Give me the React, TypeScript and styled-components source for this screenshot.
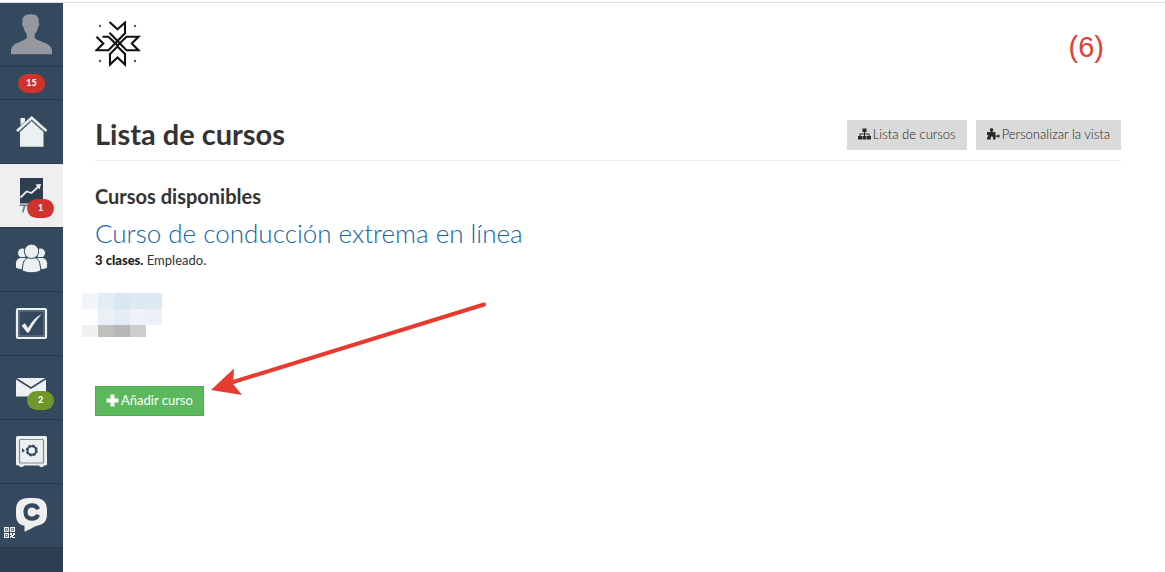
import React from "react";
import styled, { createGlobalStyle } from "styled-components";

const GlobalStyle = createGlobalStyle`
  *, *::before, *::after { box-sizing: border-box; }
  body {
    margin: 0;
    background: #fff;
    color: #333;
    font-family: Lato, "Open Sans", sans-serif;
    font-size: 13px;
    line-height: 18px;
  }
  h1, h2, h3, p, ul { margin: 0; padding: 0; }
`;

const Page = styled.div`
  position: relative;
  display: flex;
  flex-direction: column;
  min-height: 100vh;
`;

const TopLine = styled.div`
  height: 3px;
  border-bottom: 1px solid #dcdcdc;
`;

const Body = styled.div`
  display: flex;
  flex: 1;
`;

const Sidebar = styled.nav`
  flex: 0 0 63px;
  background: #2e3e50;
`;

const Menu = styled.ul`
  list-style: none;
`;

const MenuItem = styled.li`
  border-bottom: 1px solid #2c3c50;
`;

const MenuLink = styled.a<{ $active?: boolean; $short?: boolean }>`
  position: relative;
  display: flex;
  align-items: center;
  justify-content: center;
  height: ${(p) => (p.$short ? 32 : 63)}px;
  background: ${(p) => (p.$active ? "#efefef" : "#34495e")};
  text-decoration: none;

  svg { display: block; }
`;

const Badge = styled.span<{ $tone?: "green"; $floating?: boolean }>`
  ${(p) => p.$floating && "position: absolute; right: 9px; bottom: 9px;"}
  width: 27px;
  height: 19px;
  border-radius: 10px;
  background: ${(p) => (p.$tone === "green" ? "#70972b" : "#d2322d")};
  color: #fff;
  font: 900 9px/18px Lato, sans-serif;
  text-align: center;
`;

const QrMark = styled.svg`
  position: absolute;
  left: 4px;
  bottom: 9px;
`;

const Main = styled.main`
  flex: 1;
  min-width: 0;
  padding: 18px 44px 32px 32px;
`;

const Header = styled.header`
  display: flex;
  justify-content: space-between;
  align-items: flex-start;
  padding-right: 17px;
`;

const StepNumber = styled.span`
  padding-top: 8px;
  color: #e63c30;
  font: 29px/36px "Liberation Sans", Arial, sans-serif;
`;

const TitleBar = styled.div`
  display: flex;
  justify-content: space-between;
  align-items: flex-start;
  margin-top: 53px;
  padding-bottom: 10px;
  border-bottom: 1px solid #eee;
`;

const Title = styled.h1`
  font-size: 29px;
  line-height: 28px;
  font-weight: 700;
`;

const Actions = styled.div`
  display: flex;
  gap: 9px;
`;

const Button = styled.button<{ $primary?: boolean }>`
  display: inline-flex;
  align-items: center;
  justify-content: center;
  gap: 2px;
  height: 30px;
  padding: 0 10px 2px;
  border: 1px solid ${(p) => (p.$primary ? "#4cae4c" : "#dadada")};
  background: ${(p) => (p.$primary ? "#5cb85c" : "#dadada")};
  color: ${(p) => (p.$primary ? "#fff" : "#222")};
  font: ${(p) => (p.$primary ? 400 : 300)} 13px/18px Lato, sans-serif;
  white-space: nowrap;
`;

const SectionTitle = styled.h2`
  margin-top: 24px;
  font-size: 20px;
  line-height: 22px;
  font-weight: 700;
`;

const CourseTitle = styled.h3`
  margin-top: 10px;
  font-size: 26px;
  line-height: 32px;
  font-weight: 300;

  a { color: #1264ad; text-decoration: none; }
`;

const CourseMeta = styled.p`
  margin-top: 2px;
  color: #333;

  strong { color: #222; font-weight: 900; }
`;

const Mosaic = styled.svg`
  display: block;
  margin: 24px 0 49px -13px;
`;

const Arrow = styled.svg`
  position: absolute;
  left: 210px;
  top: 300px;
  pointer-events: none;
`;

const Icon = ({ children }: { children: React.ReactNode }) => (
  <svg width="63" height="63" viewBox="0 0 63 63" fill="#ecf0f1" aria-hidden="true">
    {children}
  </svg>
);

const UserIcon = () => (
  <Icon>
    <path
      fill="#95999f"
      d="M11 51.300V47.500C11.500 43 15 40.700 19 39.300L25.500 36.300C27.300 35.300 27.400 32.500 26.200 30.500C24.400 28 23.800 26 23.500 24C22 23 21.700 20.500 22.500 19.500C22 14 24.500 11 30.700 11.200C37 11 39.300 14 38.700 19.500C39.700 20.500 39.300 23 38 24C37.700 26 37 28.500 35.300 30.500C34.300 32.500 34.300 35.200 36 36.300L43 39.300C47.500 40.700 51.500 43 52 47.500V51.300Z"
    />
  </Icon>
);

const HomeIcon = () => (
  <Icon>
    <path d="M20.500 18H25V21.500L20.500 25.500Z" />
    <path d="M20 31.500L31.700 20.500L43.500 31.500V46.800H20Z" />
    <path d="M17 31L31.700 17.800L46.500 31" fill="none" stroke="#ecf0f1" strokeWidth="2.600" />
    <path d="M19.200 32.200L31.700 20.800L44.200 32.200" fill="none" stroke="#536678" strokeWidth="1" />
  </Icon>
);

const CoursesIcon = () => (
  <Icon>
    <path fill="#2c3e50" d="M20 14H43V39.500H20Z" />
    <path fill="#6b7885" d="M19.500 40.500H43V42H25.500L23.500 48.500H22L23.500 42H19.500Z" />
    <path d="M20.500 33.500L26.500 27.500L31.500 29L38.500 22.500" fill="none" stroke="#e4e9ec" strokeWidth="1.800" />
    <path d="M35.500 20.500L41 20L39.500 25.500Z" />
  </Icon>
);

const PeopleIcon = () => (
  <Icon>
    <g stroke="#34495e" strokeWidth="1">
      <circle cx="22.500" cy="25" r="5" />
      <circle cx="40.500" cy="25" r="5" />
      <path d="M15.500 40V35.500C15.500 32 17.500 30 20.500 29.500L27 29.500V41.500C22.500 42 18 41.500 15.500 40Z" />
      <path d="M47.500 40V35.500C47.500 32 45.500 30 42.500 29.500L36 29.500V41.500C40.500 42 45 41.500 47.500 40Z" />
      <path d="M22 42.500L23.200 35.500C24 31.500 27 29 31.500 29C36 29 39 31.500 39.800 35.500L41 42.500C36 45.500 27 45.500 22 42.500Z" />
      <circle cx="31.500" cy="23.300" r="7.200" />
    </g>
  </Icon>
);

const TasksIcon = () => (
  <Icon>
    <rect x="17" y="17" width="29" height="29" rx="1" fill="none" stroke="#ecf0f1" strokeWidth="2.200" />
    <rect x="19" y="19" width="25" height="25" fill="none" stroke="#8190a0" strokeWidth="0.800" />
    <path d="M21.500 33.500L25 31.200L28 36C32 29 36.500 24.500 41.500 22.300C37 27.500 32.500 33.500 29.500 39.500L27.500 41Z" />
  </Icon>
);

const MailIcon = () => (
  <Icon>
    <path d="M16 22H46V40.500H16Z" />
    <path d="M16 22.500L31 32L46 22.500" fill="none" stroke="#34495e" strokeWidth="1.500" />
  </Icon>
);

const SafeIcon = () => (
  <Icon>
    <rect x="16" y="16" width="31" height="29.500" rx="1.500" />
    <path d="M19 45H24L23 47H20ZM39 45H44L43 47H40Z" />
    <rect x="19.500" y="19.500" width="24" height="23.500" rx="1" fill="none" stroke="#7b8b99" strokeWidth="1.200" />
    <circle cx="31.800" cy="30.500" r="4.300" fill="none" stroke="#34495e" strokeWidth="2" />
    <circle cx="31.800" cy="30.500" r="5.300" fill="none" stroke="#34495e" strokeWidth="1.400" strokeDasharray="2.400 1.760" />
    <path fill="#34495e" d="M22 28.200L25 30.500L22 32.800Z" />
  </Icon>
);

const ChatIcon = () => (
  <Icon>
    <path fill="#efefef" d="M29 14H34C43 14 47 18 47 26V30C47 37 44 40.500 37.500 41.500C32.500 43.500 29 46 24.500 47.800L24.500 41.700C18.500 40.700 16 37 16 30V26C16 18 20 14 29 14Z" />
    <path
      d="M38 25.300C37 22.500 35 21.300 32 21.300C28 21.300 25.500 23.800 25.500 28C25.500 32.200 28 34.700 32 34.700C35 34.700 37 33.500 38 30.700"
      fill="none"
      stroke="#34495e"
      strokeWidth="4.200"
    />
  </Icon>
);

const QrIcon = () => (
  <QrMark width="11" height="11" viewBox="0 0 11 11" aria-hidden="true">
    <path fill="#eef1f4" d="M0 0H5V5H0ZM6 0H11V5H6ZM0 6H5V11H0ZM6 6H8V8H6ZM9 6H11V8H10V9H9ZM7 8H9V10H11V11H8V10H7ZM6 9H7V11H6Z" />
    <path fill="#6d7f92" d="M1 1H4V4H1ZM7 1H10V4H7ZM1 7H4V10H1Z" />
    <path fill="#eef1f4" d="M2 2H3V3H2ZM8 2H9V3H8ZM2 8H3V9H2Z" />
  </QrMark>
);

const Logo = () => (
  <svg width="46" height="46" viewBox="0 0 46 46" role="img" aria-label="Logo">
    <g fill="none" stroke="#111" strokeWidth="2.100">
      <path d="M15 1.500L22.500 8.300L30 1.500V11.500L15 26.500" stroke="none" />
      <path d="M14.500 1L22.500 8.300L30 1.500V12.200L13.500 29.200H1.500L8.300 22.500L1.500 15.700" />
      <path d="M7.500 15.700H13.500L22.500 24.500" />
      <path d="M14.500 11.700L31.500 29.200H43.500L36.800 22.500L43.500 15.700H31.500L22.500 24.500" />
      <path d="M15 43.500V33L22.500 25.500L30 33V43.500L22.500 36.500Z" />
    </g>
    <g fill="#555">
      <circle cx="5" cy="5" r="1.200" />
      <circle cx="40" cy="5" r="1.200" />
      <circle cx="5" cy="40" r="1.200" />
      <circle cx="40" cy="40" r="1.200" />
    </g>
  </svg>
);

const SitemapIcon = () => (
  <svg width="13" height="12" viewBox="0 0 13 12" fill="#2b2b2b" aria-hidden="true">
    <path d="M4.500 0.500H8.500V4H7V5.500H11.500V8H13V11.500H9V8H10.500V6.500H7V8H8.500V11.500H4.500V8H6V6.500H2.500V8H4V11.500H0V8H1.500V5.500H6V4H4.500Z" />
  </svg>
);

const PuzzleIcon = () => (
  <svg width="13" height="12" viewBox="0 0 13 12" fill="#2b2b2b" aria-hidden="true">
    <path d="M0 4H3.500C4 3.300 2.800 3 2.800 1.700C2.800 -0.200 6.300 -0.200 6.300 1.700C6.300 3 5.200 3.300 5.500 4H8.500V7.500H10.500V6.800H12.500V9.500H10.500V8.800H8.500V11.500H6V9.500C6 8.300 3.800 8.300 3.800 9.500V11.500H0V9C1.500 9.500 1.800 6.800 0 7Z" />
  </svg>
);

const PlusIcon = () => (
  <svg width="13" height="13" viewBox="0 0 13 13" fill="#fff" aria-hidden="true">
    <path d="M4.500 0.500H8.500V4.500H12.500V8.500H8.500V12.500H4.500V8.500H0.500V4.500H4.500Z" />
  </svg>
);

const mosaicRows = [
  { y: 0, h: 16, colors: ["#f2f6fa", "#e4edf5", "#d7e8f2", "#dfe9f2", "#dde9f3"] },
  { y: 16, h: 16, colors: ["#fefefe", "#eaf0f6", "#e4edf5", "#eff3f9", "#ebf1f7"] },
  { y: 32, h: 12, colors: ["#f0f0ef", "#bfbfbb", "#b6b7b8", "#cdced0"] },
];

export default function App() {
  return (
    <>
      <GlobalStyle />
      <Page>
        <TopLine />
        <Body>
          <Sidebar aria-label="Menú principal">
            <Menu>
              <MenuItem><MenuLink href="#perfil" aria-label="Perfil"><UserIcon /></MenuLink></MenuItem>
              <MenuItem><MenuLink href="#avisos" $short><Badge>15</Badge></MenuLink></MenuItem>
              <MenuItem><MenuLink href="#inicio" aria-label="Inicio"><HomeIcon /></MenuLink></MenuItem>
              <MenuItem><MenuLink href="#cursos" $active><CoursesIcon /><Badge $floating>1</Badge></MenuLink></MenuItem>
              <MenuItem><MenuLink href="#usuarios" aria-label="Usuarios"><PeopleIcon /></MenuLink></MenuItem>
              <MenuItem><MenuLink href="#tareas" aria-label="Tareas"><TasksIcon /></MenuLink></MenuItem>
              <MenuItem><MenuLink href="#mensajes"><MailIcon /><Badge $floating $tone="green">2</Badge></MenuLink></MenuItem>
              <MenuItem><MenuLink href="#caja" aria-label="Caja"><SafeIcon /></MenuLink></MenuItem>
              <MenuItem><MenuLink href="#chat" aria-label="Chat"><ChatIcon /><QrIcon /></MenuLink></MenuItem>
            </Menu>
          </Sidebar>
          <Main>
            <Header>
              <Logo />
              <StepNumber>(6)</StepNumber>
            </Header>
            <TitleBar>
              <Title>Lista de cursos</Title>
              <Actions>
                <Button type="button"><SitemapIcon />Lista de cursos</Button>
                <Button type="button"><PuzzleIcon />Personalizar la vista</Button>
              </Actions>
            </TitleBar>
            <SectionTitle>Cursos disponibles</SectionTitle>
            <CourseTitle><a href="#curso">Curso de conducción extrema en línea</a></CourseTitle>
            <CourseMeta><strong>3 clases.</strong> Empleado.</CourseMeta>
            <Mosaic width="80" height="44" viewBox="0 0 80 44" shapeRendering="crispEdges" aria-hidden="true">
              {mosaicRows.map((row) =>
                row.colors.map((color, i) => (
                  <rect key={`${row.y}-${i}`} x={i * 16} y={row.y} width="16" height={row.h} fill={color} />
                ))
              )}
            </Mosaic>
            <Button type="button" $primary><PlusIcon />Añadir curso</Button>
          </Main>
        </Body>
        <Arrow width="280" height="110" viewBox="0 0 280 110" aria-hidden="true">
          <path d="M274 4.500L20 83" fill="none" stroke="#e63c30" strokeWidth="4" strokeLinecap="round" />
          <path d="M1 90L24 68.500L23 84L32 95Z" fill="#e63c30" />
        </Arrow>
      </Page>
    </>
  );
}
